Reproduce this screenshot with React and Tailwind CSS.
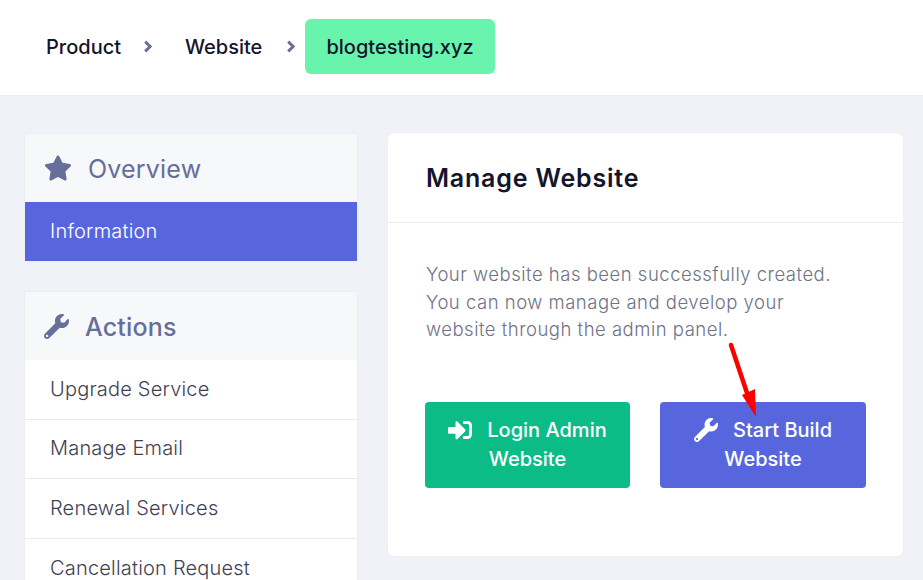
import { FaStar, FaWrench, FaSignInAlt } from 'react-icons/fa'

const font = { fontFamily: 'Inter, sans-serif' }

function Crumb({ children, className }) {
  return <span className={`text-[20px] font-medium leading-[30px] text-[#14152b] ${className}`}>{children}</span>
}

function Chevron({ className }) {
  return (
    <svg className={`text-[#666e9a] ${className}`} width="10" height="13" viewBox="0 0 10 13" fill="none">
      <path d="M2.2 1.6 L7.2 6.5 L2.2 11.4" stroke="currentColor" strokeWidth="2.9" />
    </svg>
  )
}

function SideRow({ label, active, last }) {
  return (
    <div
      className={`flex items-center pb-px pl-[25px] text-[20px] font-light leading-[28px] tracking-[0.2px] ${
        active ? 'h-[59px] bg-[#5866de] text-white' : 'bg-white text-[#3f4154]'
      } ${!active && !last ? 'h-[59.5px] border-b border-[#e9eaf2]' : ''} ${!active && last ? 'h-[59px]' : ''}`}
    >
      {label}
    </div>
  )
}

function SideHead({ icon, label, weight }) {
  return (
    <div className="flex h-[68px] items-center bg-[#f7f8fa] pl-[20px] text-[#666e9a]">
      {icon}
      <span className={`pt-[2px] text-[25px] leading-[32px] tracking-[0.2px] ${weight}`}>{label}</span>
    </div>
  )
}

export default function App() {
  return (
    <div className="relative h-[580px] w-[923px] overflow-hidden bg-[#f1f2f7]" style={font}>
      <header className="flex h-[96px] items-center border-b border-[#ebecf1] bg-white pb-[2px]">
        <Crumb className="ml-[46px] w-[76px]">Product</Crumb>
        <Chevron className="ml-[21px]" />
        <Crumb className="ml-[32px] w-[80px]">Website</Crumb>
        <Chevron className="ml-[21px]" />
        <div className="ml-[9px] flex h-[55px] w-[190px] items-center justify-center rounded-[6px] bg-[#69f4ae]">
          <Crumb>blogtesting.xyz</Crumb>
        </div>
      </header>

      <div className="flex items-start pl-[25px] pr-[20px] pt-[37px]">
        <aside className="flex w-[332px] flex-col gap-[31px] pt-px">
          <section className="shadow-[0_0_2px_rgba(20,20,60,0.06)]">
            <SideHead icon={<FaStar className="-ml-[1px] mr-[16px] h-[28px] w-[28px]" />} label="Overview" weight="font-normal" />
            <SideRow label="Information" active />
          </section>
          <section className="shadow-[0_0_2px_rgba(20,20,60,0.06)]">
            <SideHead icon={<FaWrench className="-ml-[1px] mr-[16px] h-[25px] w-[25px]" />} label="Actions" weight="font-medium" />
            <SideRow label="Upgrade Service" />
            <SideRow label="Manage Email" />
            <SideRow label="Renewal Services" />
            <SideRow label="Cancellation Request" last />
          </section>
        </aside>

        <main className="ml-[31px] h-[423px] w-[515px] rounded-[6px] bg-white shadow-[0_0_2px_rgba(20,20,60,0.06)]">
          <div className="flex h-[90px] items-center border-b border-[#ebecf1] pl-[38px]">
            <h1 className="text-[25px] font-semibold leading-[32px] tracking-[0.8px] text-[#14152b]">Manage Website</h1>
          </div>
          <div className="px-[38px] pt-[38px]">
            <p className="w-[415px] text-[18.5px] font-light leading-[27.5px] tracking-[0.5px] text-[#6f7288]">
              Your website has been successfully created. You can now manage and develop your website through the admin panel.
            </p>
            <div className="-ml-px mt-[58px] flex gap-[30px]">
              <a className="flex h-[86px] w-[205px] shrink-0 flex-col items-center justify-center rounded-[4px] bg-[#0bbc87] text-center text-[20px] font-medium leading-[29px] text-white">
                <span className="flex items-center">
                  <FaSignInAlt className="mr-[15px] h-[24px] w-[24px]" />
                  Login Admin
                </span>
                <span>Website</span>
              </a>
              <a className="flex h-[86px] w-[206px] shrink-0 flex-col items-center justify-center rounded-[4px] bg-[#5866de] text-center text-[20px] font-medium leading-[29px] text-white">
                <span className="flex items-center">
                  <FaWrench className="mr-[15px] h-[24px] w-[24px]" />
                  Start Build
                </span>
                <span>Website</span>
              </a>
            </div>
          </div>
        </main>
      </div>

      {/* annotation arrow */}
      <svg className="absolute left-[720px] top-[335px]" width="50" height="90" viewBox="0 0 50 90">
        <path d="M11 10 L27 58" stroke="#ff0000" strokeWidth="4.5" strokeLinecap="round" fill="none" />
        <path d="M22 60 L35 54 L36 82 Z" fill="#ff0000" />
      </svg>
    </div>
  )
}
